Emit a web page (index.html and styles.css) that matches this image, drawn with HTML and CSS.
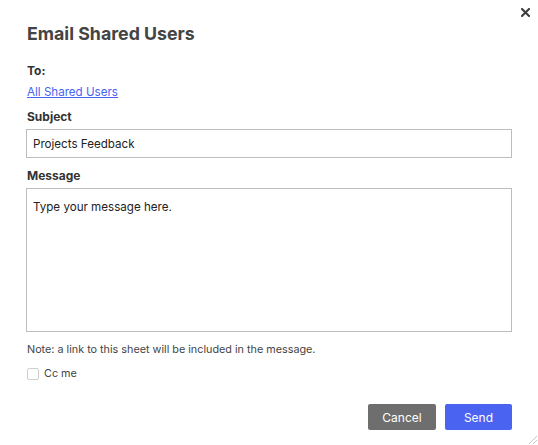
FILE: index.html
```html
<!DOCTYPE html>
<html>
<head>
<meta charset="utf-8">
<link rel="stylesheet" href="styles.css">
</head>
<body>
<div class="dialog">
  <button class="close" aria-label="Close">
    <svg width="9" height="9" viewBox="0 0 9 9"><path d="M1 1L8 8M8 1L1 8" stroke="#3a3a3a" stroke-width="2" stroke-linecap="square"/></svg>
  </button>
  <h1 class="title">Email Shared Users</h1>
  <div class="label to">To:</div>
  <a class="link" href="#">All Shared Users</a>
  <div class="label subject">Subject</div>
  <div class="input">Projects Feedback</div>
  <div class="label message">Message</div>
  <div class="textarea">Type your message here.</div>
  <div class="note">Note: a link to this sheet will be included in the message.</div>
  <label class="cc"><span class="box"></span><span>Cc me</span></label>
  <div class="actions">
    <button class="btn cancel">Cancel</button>
    <button class="btn send">Send</button>
  </div>
  <svg class="grip" width="12" height="12" viewBox="0 0 12 12"><path d="M11 3L3 11M11 7L7 11" stroke="#c8c8c8" stroke-width="1"/></svg>
</div>
</body>
</html>
```
FILE: styles.css
```css
html, body {
  margin: 0;
  padding: 0;
  background: #ffffff;
}
body {
  font-family: Inter, "Noto Sans", sans-serif;
  color: #333333;
  font-size: 12px;
}
.dialog {
  position: relative;
  width: 538px;
  height: 445px;
  box-sizing: border-box;
  padding: 0 26px 0 26px;
  display: flex;
  flex-direction: column;
  overflow: hidden;
}
.dialog > * { flex-shrink: 0; }
.close {
  position: absolute;
  top: 8px;
  right: 8px;
  width: 9px;
  height: 9px;
  padding: 0;
  border: 0;
  background: none;
  display: block;
}
.close svg { display: block; }
.title {
  margin: 23px 0 0 1px;
  font-size: 17.8px;
  font-weight: 700;
  line-height: 22px;
  color: #444444;
}
.label {
  font-weight: 700;
  color: #333333;
  font-size: 12px;
  line-height: 14px;
  margin-left: 1px;
}
.to { margin-top: 19px; }
.link {
  margin: 7px 0 0 1px;
  color: #4a63f0;
  text-decoration: underline;
  line-height: 14px;
  font-size: 11.6px;
  align-self: flex-start;
}
.subject { margin-top: 11px; }
.input {
  margin-top: 5px;
  height: 29px;
  box-sizing: border-box;
  border: 1px solid #bdbdbd;
  padding: 0 6px;
  display: flex;
  align-items: center;
  color: #222222;
  font-size: 11.6px;
  width: 486px;
}
.message { margin-top: 11px; }
.textarea {
  margin-top: 5px;
  height: 144px;
  box-sizing: border-box;
  border: 1px solid #bdbdbd;
  padding: 11px 6px;
  color: #222222;
  font-size: 11.6px;
  width: 486px;
  line-height: 14px;
}
.note {
  margin: 11px 0 0 1px;
  font-size: 10.8px;
  color: #444444;
  line-height: 14px;
}
.cc {
  margin: 10px 0 0 1px;
  display: flex;
  align-items: center;
  gap: 5px;
  font-size: 10.8px;
  color: #444444;
}
.box {
  width: 12px;
  height: 12px;
  box-sizing: border-box;
  border: 1px solid #cfcfcf;
  border-radius: 2px;
  background: #fff;
}
.actions {
  margin-top: 24px;
  display: flex;
  justify-content: flex-end;
  gap: 9px;
}
.btn {
  height: 26px;
  border: 0;
  border-radius: 2px;
  color: #ffffff;
  font-family: Inter, "Noto Sans", sans-serif;
  font-size: 12px;
  padding: 0;
}
.cancel { width: 68px; background: #6e6e6e; }
.send { width: 67px; background: #4a63f0; }
.grip {
  position: absolute;
  right: 0;
  bottom: 0;
}
```
